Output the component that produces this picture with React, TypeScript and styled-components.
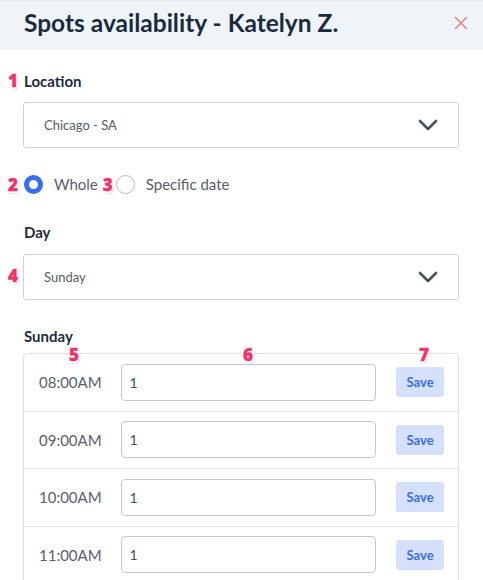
import React, { useState } from 'react';
import styled, { createGlobalStyle } from 'styled-components';

const GlobalStyle = createGlobalStyle`
  html, body {
    margin: 0;
    padding: 0;
    background: #ffffff;
    font-family: Lato, 'Open Sans', Arial, sans-serif;
  }
  * {
    box-sizing: border-box;
  }
`;

const Page = styled.div`
  width: 483px;
  height: 580px;
  overflow: hidden;
  position: relative;
`;

const Header = styled.div`
  height: 50px;
  background: #eff4f9;
  border-top: 1px solid #e2e6ea;
  display: flex;
  align-items: center;
  justify-content: space-between;
  padding: 0 15px 6px 24px;
`;

const Title = styled.h1`
  margin: 0;
  font-size: 24.5px;
  font-weight: 700;
  color: #1b2a3f;
`;

const Close = styled.button`
  border: none;
  background: none;
  padding: 0;
  width: 14px;
  height: 14px;
  display: flex;
  cursor: pointer;
`;

const Body = styled.div`
  padding: 0 24px 0 23px;
  display: flex;
  flex-direction: column;
`;

const Field = styled.div<{ $top: number }>`
  position: relative;
  margin-top: ${(p) => p.$top}px;
`;

const Label = styled.div`
  font-size: 15px;
  font-weight: 700;
  color: #1f2b3b;
  padding-left: 1px;
  line-height: 18px;
`;

const Select = styled.div<{ $top: number }>`
  margin-top: ${(p) => p.$top}px;
  height: 46px;
  border: 1px solid #cfd3d8;
  border-radius: 3px;
  display: flex;
  align-items: center;
  justify-content: space-between;
  padding: 0 20px 0 20px;
  font-size: 13px;
  color: #555c66;
  position: relative;
`;

const RadioRow = styled.div`
  margin-top: 26px;
  display: flex;
  align-items: center;
  height: 20px;
`;

const RadioItem = styled.label<{ $gapAfter: number }>`
  display: flex;
  align-items: center;
  gap: 11px;
  font-size: 15px;
  color: #575e68;
  margin-right: ${(p) => p.$gapAfter}px;
  position: relative;
`;

const RadioDot = styled.span<{ $on: boolean }>`
  width: 19px;
  height: 19px;
  border-radius: 50%;
  border: ${(p) => (p.$on ? '5px solid #3a6df0' : '1px solid #b9bec5')};
  background: #fff;
  margin-left: ${(p) => (p.$on ? '1px' : '0')};
`;

const Table = styled.div`
  margin-top: 8px;
  border: 1px solid #dcdfe3;
  border-bottom: none;
  border-radius: 4px 4px 0 0;
  position: relative;
`;

const Row = styled.div`
  height: 57.5px;
  display: flex;
  align-items: center;
  padding: 0 14px 0 15px;
  border-bottom: 1px solid #e3e6e9;
`;

const Time = styled.div`
  width: 82px;
  font-size: 15px;
  color: #5a606a;
`;

const Input = styled.input`
  width: 257px;
  height: 37px;
  border: 1px solid #c4c8ce;
  border-radius: 4px;
  padding: 0 8px;
  font-family: Lato, Arial, sans-serif;
  font-size: 14px;
  color: #4a505a;
  outline: none;
`;

const SaveButton = styled.button`
  margin-left: 20px;
  width: 48px;
  height: 30px;
  border: none;
  border-radius: 3px;
  background: #d5e1fc;
  color: #3c6de8;
  font-family: Lato, Arial, sans-serif;
  font-size: 13px;
  font-weight: 700;
  cursor: pointer;
`;

const Mark = styled.span<{ $x: number; $y: number }>`
  position: absolute;
  left: ${(p) => p.$x}px;
  top: ${(p) => p.$y}px;
  font-family: 'Open Sans', Lato, Arial, sans-serif;
  font-size: 17px;
  font-weight: 800;
  line-height: 17px;
  color: #f1306c;
  -webkit-text-stroke: 0.4px #f1306c;
  text-shadow: 1.5px 0 0 #fff, -1.5px 0 0 #fff, 0 1.5px 0 #fff, 0 -1.5px 0 #fff,
    1px 1px 0 #fff, -1px -1px 0 #fff, 1px -1px 0 #fff, -1px 1px 0 #fff,
    1px 2px 3px rgba(0, 0, 0, 0.25);
  pointer-events: none;
  z-index: 2;
`;

const Chevron = () => (
  <svg width="20" height="12" viewBox="0 0 20 12">
    <path d="M2 2 L10 10 L18 2" fill="none" stroke="#4a525d" strokeWidth="2.6" strokeLinecap="round" strokeLinejoin="round" />
  </svg>
);

const times = ['08:00AM', '09:00AM', '10:00AM', '11:00AM'];

const App = () => {
  const [mode, setMode] = useState<'whole' | 'date'>('whole');

  return (
    <Page>
      <GlobalStyle />
      <Header>
        <Title>Spots availability - Katelyn Z.</Title>
        <Close>
          <svg width="14" height="14" viewBox="0 0 14 14">
            <path d="M1 1 L13 13 M13 1 L1 13" stroke="#f07474" strokeWidth="1.4" />
          </svg>
        </Close>
      </Header>
      <Body>
        <Field $top={22}>
          <Mark $x={-15} $y={0}>1</Mark>
          <Label>Location</Label>
          <Select $top={12}>
            Chicago - SA
            <Chevron />
          </Select>
        </Field>
        <RadioRow>
          <RadioItem $gapAfter={18} onClick={() => setMode('whole')}>
            <Mark $x={-15} $y={1}>2</Mark>
            <RadioDot $on={mode === 'whole'} />
            Whole
          </RadioItem>
          <RadioItem $gapAfter={0} onClick={() => setMode('date')}>
            <Mark $x={-13} $y={1}>3</Mark>
            <RadioDot $on={mode === 'date'} />
            Specific date
          </RadioItem>
        </RadioRow>
        <Field $top={29}>
          <Label>Day</Label>
          <Select $top={13}>
            <Mark $x={-16} $y={12}>4</Mark>
            Sunday
            <Chevron />
          </Select>
        </Field>
        <Field $top={27}>
          <Label>Sunday</Label>
          <Table>
            <Mark $x={45} $y={-8}>5</Mark>
            <Mark $x={219} $y={-8}>6</Mark>
            <Mark $x={395} $y={-8}>7</Mark>
            {times.map((t) => (
              <Row key={t}>
                <Time>{t}</Time>
                <Input defaultValue="1" />
                <SaveButton>Save</SaveButton>
              </Row>
            ))}
          </Table>
        </Field>
      </Body>
    </Page>
  );
};

export default App;
